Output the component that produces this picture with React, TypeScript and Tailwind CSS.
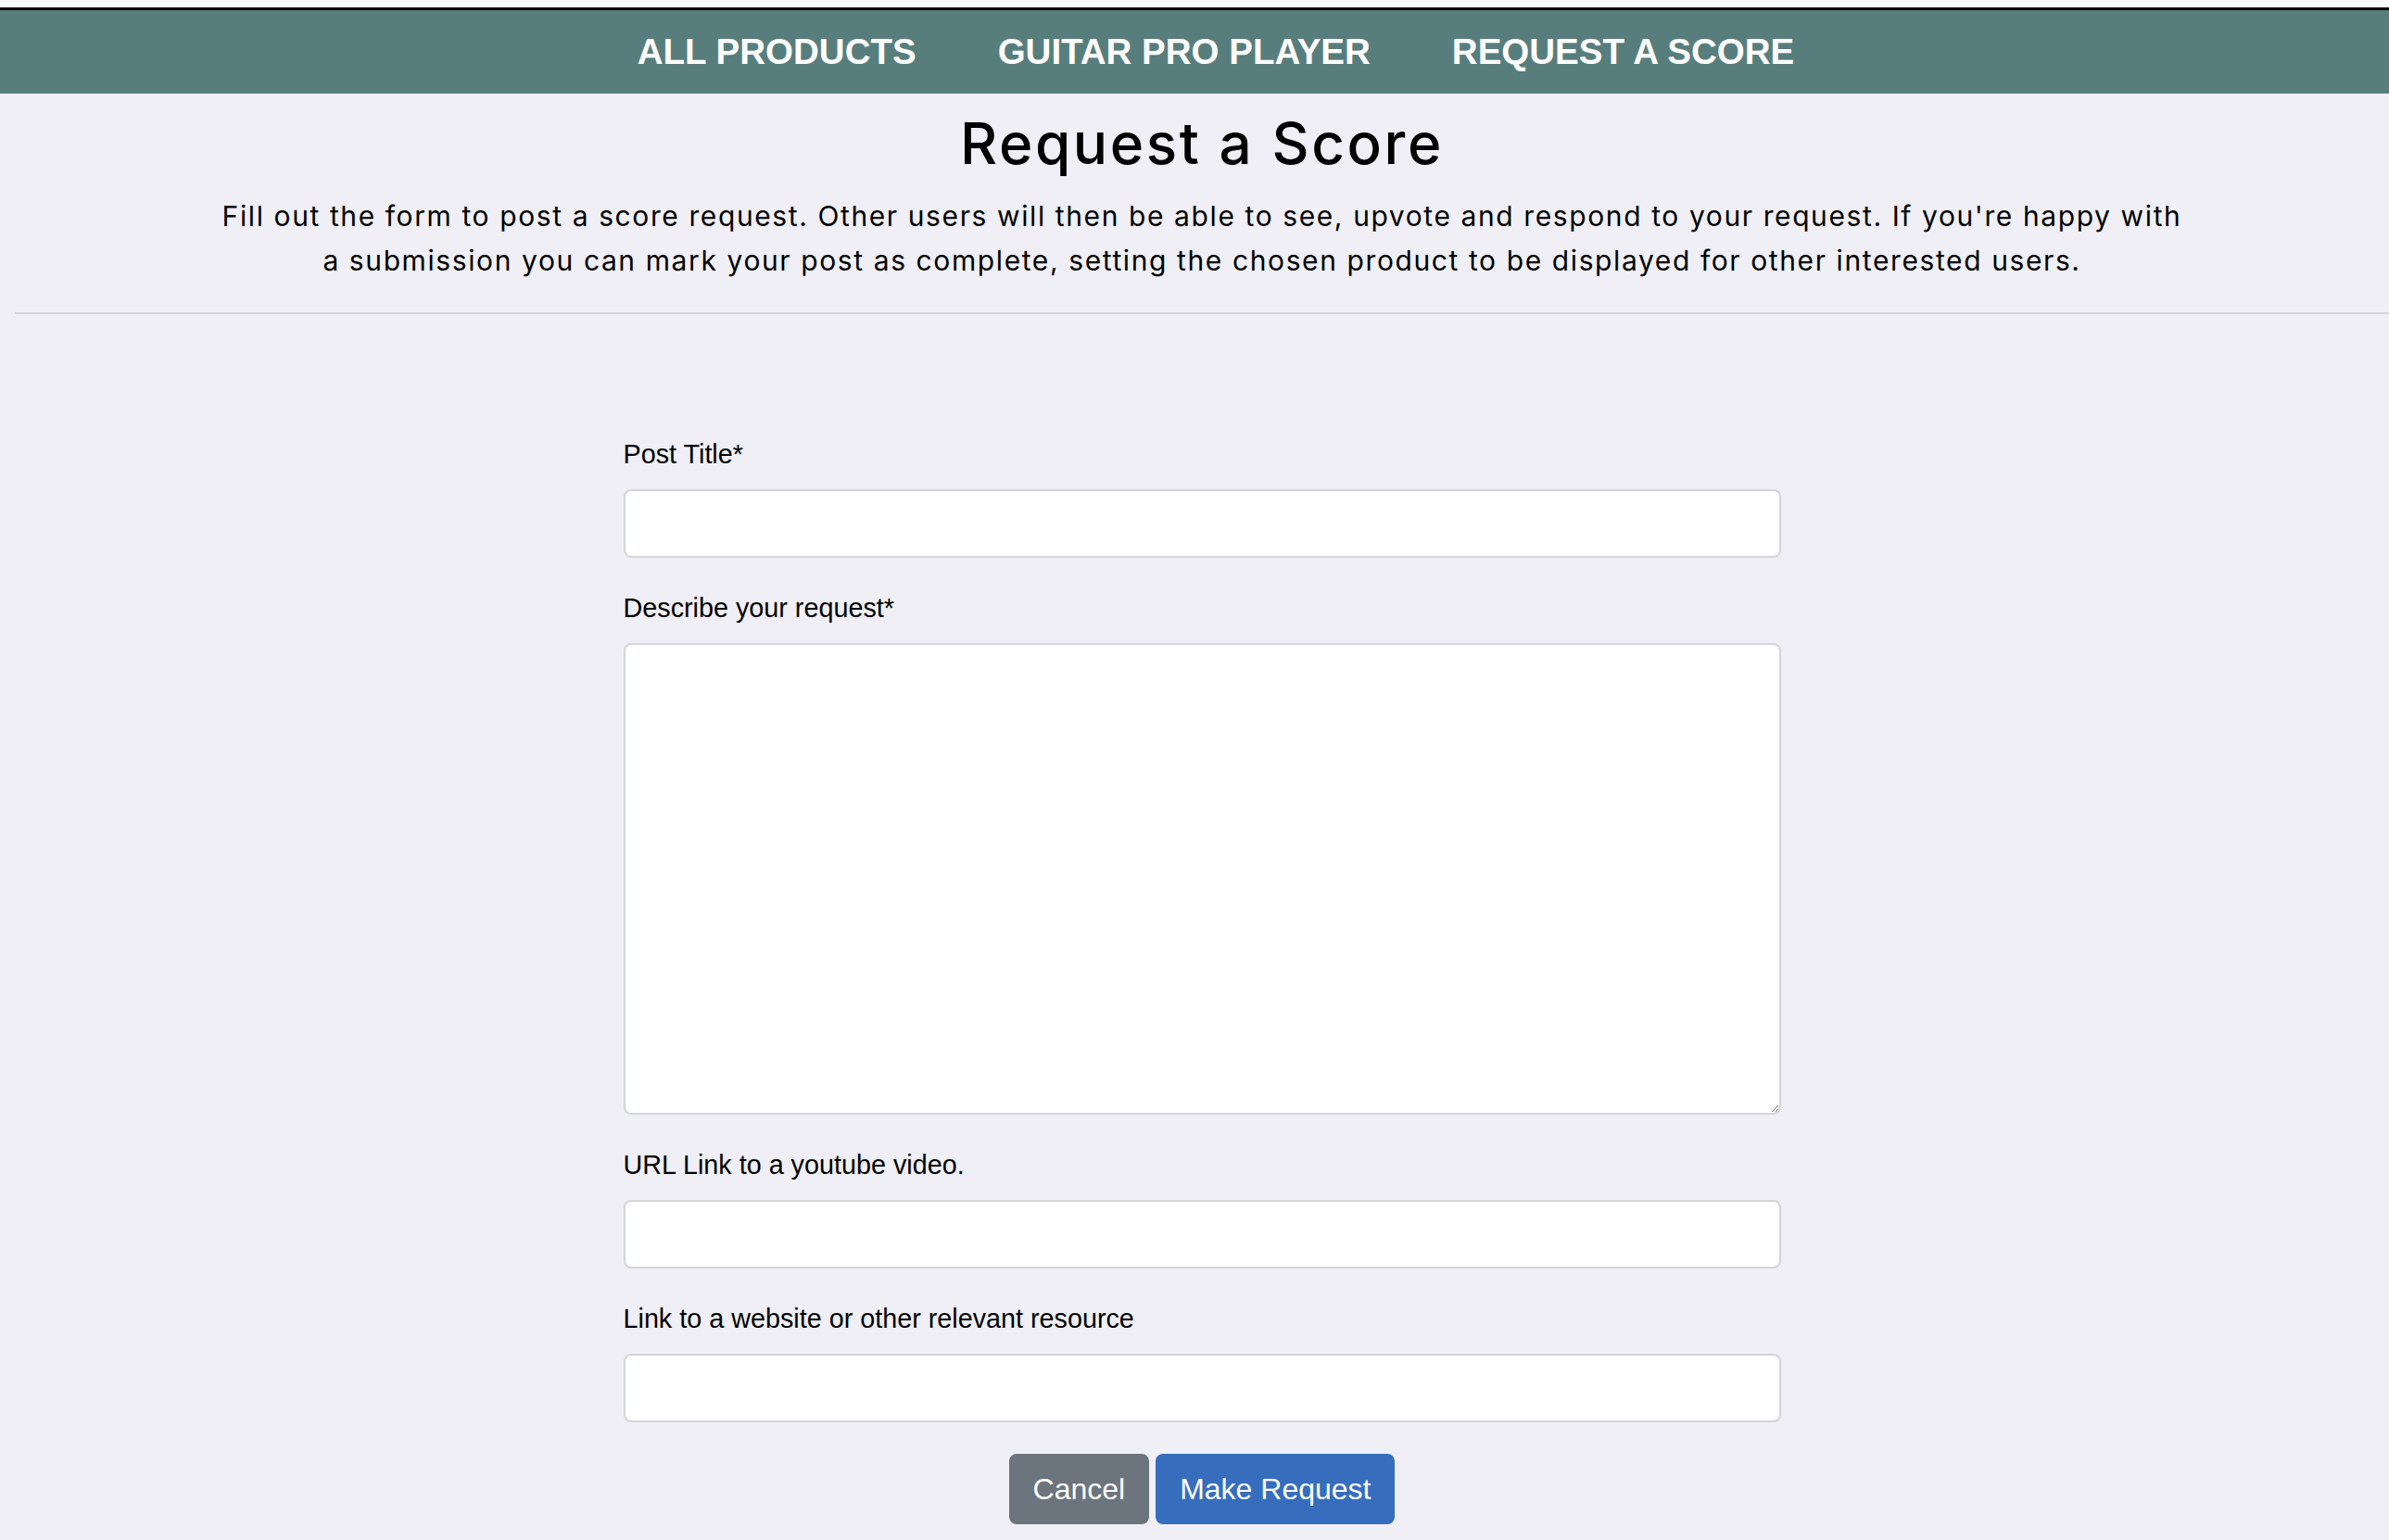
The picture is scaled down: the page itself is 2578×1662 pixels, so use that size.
import React from "react";

const sans = { fontFamily: '"Liberation Sans", Arial, sans-serif' };

function Field({ label, children, last }: { label: string; children: React.ReactNode; last?: boolean }) {
  return (
    <div className={last ? "" : "mb-[38px]"}>
      <label className="block text-[28.75px] leading-[32px] text-black mb-[22px] font-['Liberation_Sans',Arial,sans-serif]">
        {label}
      </label>
      {children}
    </div>
  );
}

export default function App() {
  return (
    <div className="min-h-screen bg-[#efeff5]" style={sans}>
      <div className="h-[8px] bg-[#fafafa]" />
      <nav className="h-[93px] border-t-[3px] border-black bg-[#577e7d] flex items-center justify-center pl-[46px] gap-[88px]">
        {["ALL PRODUCTS", "GUITAR PRO PLAYER", "REQUEST A SCORE"].map((t) => (
          <a key={t} className="text-white font-bold text-[38.5px] font-['Liberation_Sans',Arial,sans-serif] whitespace-nowrap">
            {t}
          </a>
        ))}
      </nav>
      <div className="pl-[16px]">
        <header className="text-center text-black font-['Inter',sans-serif]">
          <h1 className="mt-[15px] text-[62px] leading-[77px] font-medium tracking-[2.6px]">Request a Score</h1>
          <p className="mt-[16px] text-[30px] leading-[48px] font-normal tracking-[1.6px]">
            Fill out the form to post a score request. Other users will then be able to see, upvote and respond to your request. If you're happy with
            <br />
            a submission you can mark your post as complete, setting the chosen product to be displayed for other interested users.
          </p>
        </header>
        <hr className="mt-[32px] border-0 border-t-[2px] border-[#d4d5da]" />
        <form className="w-[1249px] mx-auto mt-[135px]" onSubmit={(e) => e.preventDefault()}>
          <Field label="Post Title*">
            <input type="text" className="block w-full h-[74px] bg-white border-2 border-[#d3d5d9] rounded-[8px] outline-none px-4 text-[28px]" />
          </Field>
          <Field label="Describe your request*">
            <textarea className="block w-full h-[509px] bg-white border-2 border-[#d3d5d9] rounded-[8px] outline-none px-4 py-2 text-[28px]" />
          </Field>
          <Field label="URL Link to a youtube video.">
            <input type="url" className="block w-full h-[74px] bg-white border-2 border-[#d3d5d9] rounded-[8px] outline-none px-4 text-[28px]" />
          </Field>
          <Field label="Link to a website or other relevant resource" last>
            <input type="url" className="block w-full h-[74px] bg-white border-2 border-[#d3d5d9] rounded-[8px] outline-none px-4 text-[28px]" />
          </Field>
          <div className="flex justify-center gap-[7px] mt-[34px]">
            <button type="button" className="h-[76px] px-[24px] border-2 border-[#6c757d] bg-[#6c757d] text-white text-[32px] leading-[48px] rounded-[8px] font-['Liberation_Sans',Arial,sans-serif]">
              Cancel
            </button>
            <button type="submit" className="h-[76px] px-[24px] border-2 border-[#366dbd] bg-[#366dbd] text-white text-[32px] leading-[48px] rounded-[8px] font-['Liberation_Sans',Arial,sans-serif]">
              Make Request
            </button>
          </div>
        </form>
      </div>
    </div>
  );
}
